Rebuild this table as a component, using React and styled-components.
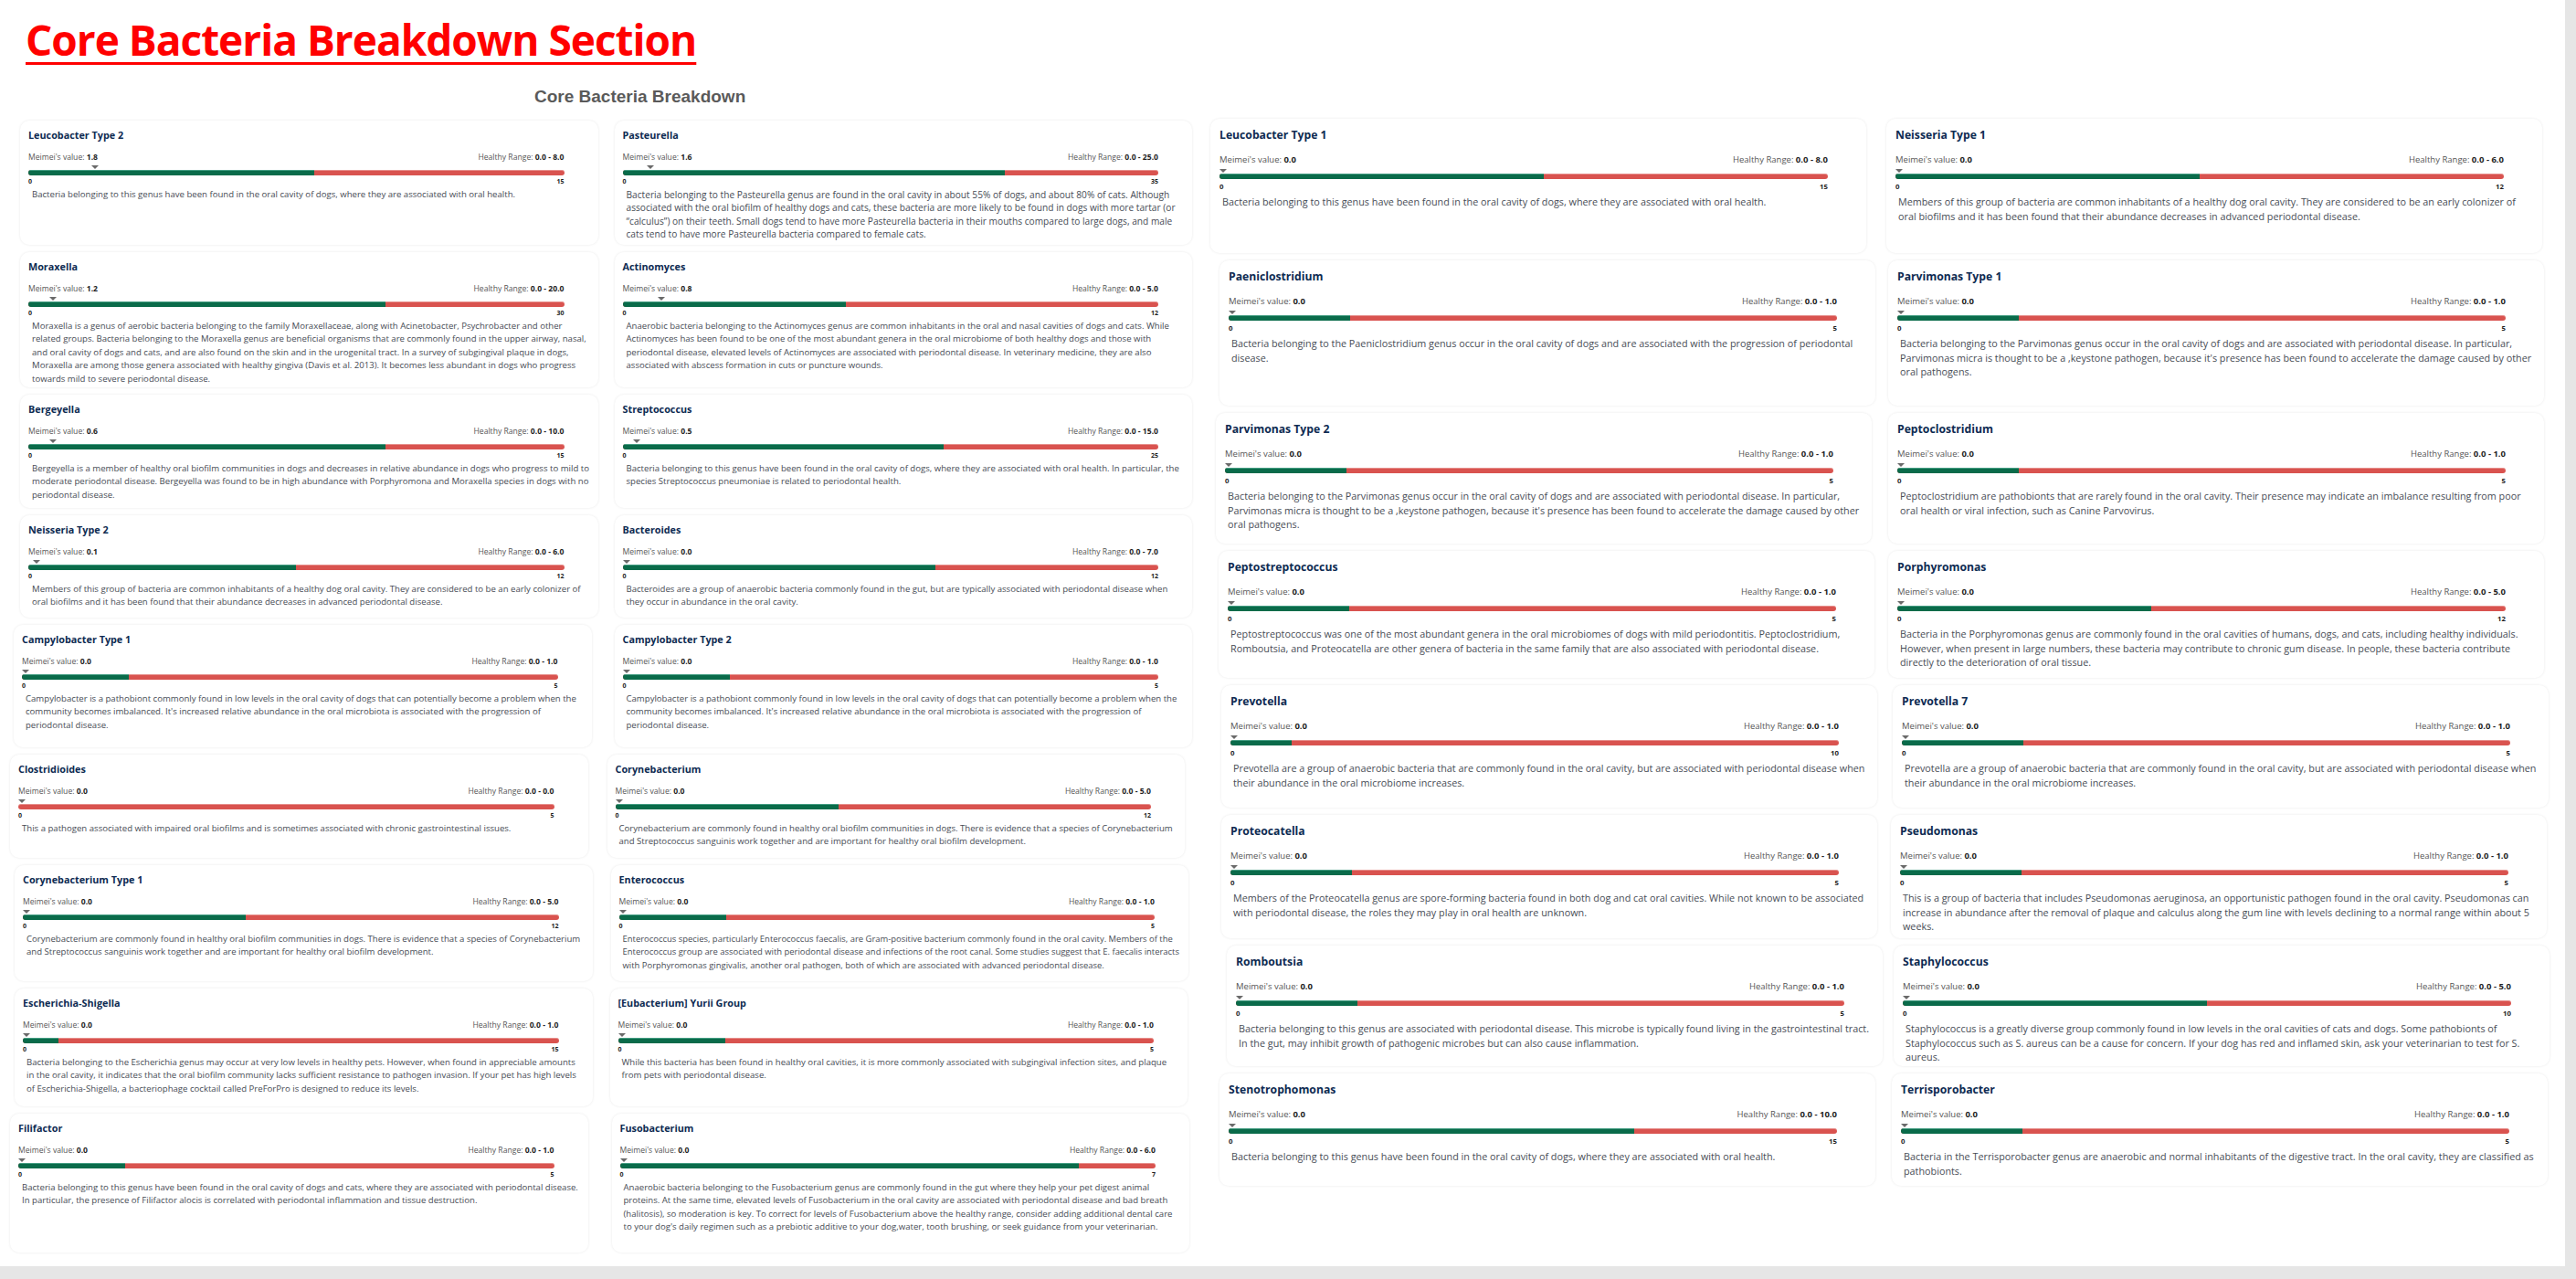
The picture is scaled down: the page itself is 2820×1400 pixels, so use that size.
import React from "react";
import styled, { createGlobalStyle } from "styled-components";

const GlobalStyle = createGlobalStyle`
  html, body {
    margin: 0;
    padding: 0;
    background: #e6e6e6;
  }
  body {
    font-family: "Open Sans", "Noto Sans", sans-serif;
  }
`;

// two scales of the same card: the left half is a bit smaller than the right
const sizes = {
  sm: {
    padX: 9,
    padTop: 9,
    title: 10.8,
    titleLh: 14,
    labelGap: 12,
    label: 8.6,
    labelLh: 10,
    zone: 9,
    tri: 8,
    barH: 6,
    barRight: 28,
    tickGap: 3,
    tick: 7,
    tickLh: 8,
    descGap: 3,
    desc: 9.6,
    descLh: 14.4,
    descPad: 4,
  },
  lg: {
    padX: 10,
    padTop: 10,
    title: 12.2,
    titleLh: 16,
    labelGap: 13,
    label: 9.5,
    labelLh: 11,
    zone: 10,
    tri: 9,
    barH: 6,
    barRight: 32,
    tickGap: 4,
    tick: 7.8,
    tickLh: 9,
    descGap: 4,
    desc: 10.8,
    descLh: 15.7,
    descPad: 3,
  },
};

// nudge: small sideways offset of a card; boost: larger body text in that card
const leftCards = [
  {
    name: "Leucobacter Type 2", value: 1.8, range: 8, max: 15,
    desc: "Bacteria belonging to this genus have been found in the oral cavity of dogs, where they are associated with oral health.",
  },
  {
    name: "Pasteurella", value: 1.6, range: 25, max: 35, boost: 1.06,
    desc: "Bacteria belonging to the Pasteurella genus are found in the oral cavity in about 55% of dogs, and about 80% of cats. Although associated with the oral biofilm of healthy dogs and cats, these bacteria are more likely to be found in dogs with more tartar (or \u201ccalculus\u201d) on their teeth. Small dogs tend to have more Pasteurella bacteria in their mouths compared to large dogs, and male cats tend to have more Pasteurella bacteria compared to female cats.",
  },
  {
    name: "Moraxella", value: 1.2, range: 20, max: 30,
    desc: "Moraxella is a genus of aerobic bacteria belonging to the family Moraxellaceae, along with Acinetobacter, Psychrobacter and other related groups. Bacteria belonging to the Moraxella genus are beneficial organisms that are commonly found in the upper airway, nasal, and oral cavity of dogs and cats, and are also found on the skin and in the urogenital tract. In a survey of subgingival plaque in dogs, Moraxella are among those genera associated with healthy gingiva (Davis et al. 2013). It becomes less abundant in dogs who progress towards mild to severe periodontal disease.",
  },
  {
    name: "Actinomyces", value: 0.8, range: 5, max: 12,
    desc: "Anaerobic bacteria belonging to the Actinomyces genus are common inhabitants in the oral and nasal cavities of dogs and cats. While Actinomyces has been found to be one of the most abundant genera in the oral microbiome of both healthy dogs and those with periodontal disease, elevated levels of Actinomyces are associated with periodontal disease. In veterinary medicine, they are also associated with abscess formation in cuts or puncture wounds.",
  },
  {
    name: "Bergeyella", value: 0.6, range: 10, max: 15,
    desc: "Bergeyella is a member of healthy oral biofilm communities in dogs and decreases in relative abundance in dogs who progress to mild to moderate periodontal disease. Bergeyella was found to be in high abundance with Porphyromona and Moraxella species in dogs with no periodontal disease.",
  },
  {
    name: "Streptococcus", value: 0.5, range: 15, max: 25,
    desc: "Bacteria belonging to this genus have been found in the oral cavity of dogs, where they are associated with oral health. In particular, the species Streptococcus pneumoniae is related to periodontal health.",
  },
  {
    name: "Neisseria Type 2", value: 0.1, range: 6, max: 12,
    desc: "Members of this group of bacteria are common inhabitants of a healthy dog oral cavity. They are considered to be an early colonizer of oral biofilms and it has been found that their abundance decreases in advanced periodontal disease.",
  },
  {
    name: "Bacteroides", value: 0, range: 7, max: 12,
    desc: "Bacteroides are a group of anaerobic bacteria commonly found in the gut, but are typically associated with periodontal disease when they occur in abundance in the oral cavity.",
  },
  {
    name: "Campylobacter Type 1", value: 0, range: 1, max: 5, nudge: -7,
    desc: "Campylobacter is a pathobiont commonly found in low levels in the oral cavity of dogs that can potentially become a problem when the community becomes imbalanced. It's increased relative abundance in the oral microbiota is associated with the progression of periodontal disease.",
  },
  {
    name: "Campylobacter Type 2", value: 0, range: 1, max: 5,
    desc: "Campylobacter is a pathobiont commonly found in low levels in the oral cavity of dogs that can potentially become a problem when the community becomes imbalanced. It's increased relative abundance in the oral microbiota is associated with the progression of periodontal disease.",
  },
  {
    name: "Clostridioides", value: 0, range: 0, max: 5, nudge: -11,
    desc: "This a pathogen associated with impaired oral biofilms and is sometimes associated with chronic gastrointestinal issues.",
  },
  {
    name: "Corynebacterium", value: 0, range: 5, max: 12, nudge: -8,
    desc: "Corynebacterium are commonly found in healthy oral biofilm communities in dogs. There is evidence that a species of Corynebacterium and Streptococcus sanguinis work together and are important for healthy oral biofilm development.",
  },
  {
    name: "Corynebacterium Type 1", value: 0, range: 5, max: 12, nudge: -6,
    desc: "Corynebacterium are commonly found in healthy oral biofilm communities in dogs. There is evidence that a species of Corynebacterium and Streptococcus sanguinis work together and are important for healthy oral biofilm development.",
  },
  {
    name: "Enterococcus", value: 0, range: 1, max: 5, nudge: -4, boost: 0.985,
    desc: "Enterococcus species, particularly Enterococcus faecalis, are Gram-positive bacterium commonly found in the oral cavity. Members of the Enterococcus group are associated with periodontal disease and infections of the root canal. Some studies suggest that E. faecalis interacts with Porphyromonas gingivalis, another oral pathogen, both of which are associated with advanced periodontal disease.",
  },
  {
    name: "Escherichia-Shigella", value: 0, range: 1, max: 15, nudge: -6,
    desc: "Bacteria belonging to the Escherichia genus may occur at very low levels in healthy pets. However, when found in appreciable amounts in the oral cavity, it indicates that the oral biofilm community lacks sufficient resistance to pathogen invasion. If your pet has high levels of Escherichia-Shigella, a bacteriophage cocktail called PreForPro is designed to reduce its levels.",
  },
  {
    name: "[Eubacterium] Yurii Group", value: 0, range: 1, max: 5, nudge: -5,
    desc: "While this bacteria has been found in healthy oral cavities, it is more commonly associated with subgingival infection sites, and plaque from pets with periodontal disease.",
  },
  {
    name: "Filifactor", value: 0, range: 1, max: 5, nudge: -11,
    desc: "Bacteria belonging to this genus have been found in the oral cavity of dogs and cats, where they are associated with periodontal disease. In particular, the presence of Filifactor alocis is correlated with periodontal inflammation and tissue destruction.",
  },
  {
    name: "Fusobacterium", value: 0, range: 6, max: 7, nudge: -3,
    desc: "Anaerobic bacteria belonging to the Fusobacterium genus are commonly found in the gut where they help your pet digest animal proteins. At the same time, elevated levels of Fusobacterium in the oral cavity are associated with periodontal disease and bad breath (halitosis), so moderation is key. To correct for levels of Fusobacterium above the healthy range, consider adding additional dental care to your dog's daily regimen such as a prebiotic additive to your dog,water, tooth brushing, or seek guidance from your veterinarian.",
  },
];

const rightCards = [
  {
    name: "Leucobacter Type 1", value: 0, range: 8, max: 15, nudge: -6,
    desc: "Bacteria belonging to this genus have been found in the oral cavity of dogs, where they are associated with oral health.",
  },
  {
    name: "Neisseria Type 1", value: 0, range: 6, max: 12, nudge: -2,
    desc: "Members of this group of bacteria are common inhabitants of a healthy dog oral cavity. They are considered to be an early colonizer of oral biofilms and it has been found that their abundance decreases in advanced periodontal disease.",
  },
  {
    name: "Paeniclostridium", value: 0, range: 1, max: 5, nudge: 4,
    desc: "Bacteria belonging to the Paeniclostridium genus occur in the oral cavity of dogs and are associated with the progression of periodontal disease.",
  },
  {
    name: "Parvimonas Type 1", value: 0, range: 1, max: 5,
    desc: "Bacteria belonging to the Parvimonas genus occur in the oral cavity of dogs and are associated with periodontal disease. In particular, Parvimonas micra is thought to be a \u201akeystone pathogen, because it's presence has been found to accelerate the damage caused by other oral pathogens.",
  },
  {
    name: "Parvimonas Type 2", value: 0, range: 1, max: 5,
    desc: "Bacteria belonging to the Parvimonas genus occur in the oral cavity of dogs and are associated with periodontal disease. In particular, Parvimonas micra is thought to be a \u201akeystone pathogen, because it's presence has been found to accelerate the damage caused by other oral pathogens.",
  },
  {
    name: "Peptoclostridium", value: 0, range: 1, max: 5,
    desc: "Peptoclostridium are pathobionts that are rarely found in the oral cavity. Their presence may indicate an imbalance resulting from poor oral health or viral infection, such as Canine Parvovirus.",
  },
  {
    name: "Peptostreptococcus", value: 0, range: 1, max: 5, nudge: 3,
    desc: "Peptostreptococcus was one of the most abundant genera in the oral microbiomes of dogs with mild periodontitis. Peptoclostridium, Romboutsia, and Proteocatella are other genera of bacteria in the same family that are also associated with periodontal disease.",
  },
  {
    name: "Porphyromonas", value: 0, range: 5, max: 12,
    desc: "Bacteria in the Porphyromonas genus are commonly found in the oral cavities of humans, dogs, and cats, including healthy individuals. However, when present in large numbers, these bacteria may contribute to chronic gum disease. In people, these bacteria contribute directly to the deterioration of oral tissue.",
  },
  {
    name: "Prevotella", value: 0, range: 1, max: 10, nudge: 6,
    desc: "Prevotella are a group of anaerobic bacteria that are commonly found in the oral cavity, but are associated with periodontal disease when their abundance in the oral microbiome increases.",
  },
  {
    name: "Prevotella 7", value: 0, range: 1, max: 5, nudge: 5,
    desc: "Prevotella are a group of anaerobic bacteria that are commonly found in the oral cavity, but are associated with periodontal disease when their abundance in the oral microbiome increases.",
  },
  {
    name: "Proteocatella", value: 0, range: 1, max: 5, nudge: 6,
    desc: "Members of the Proteocatella genus are spore-forming bacteria found in both dog and cat oral cavities. While not known to be associated with periodontal disease, the roles they may play in oral health are unknown.",
  },
  {
    name: "Pseudomonas", value: 0, range: 1, max: 5, nudge: 3,
    desc: "This is a group of bacteria that includes Pseudomonas aeruginosa, an opportunistic pathogen found in the oral cavity. Pseudomonas can increase in abundance after the removal of plaque and calculus along the gum line with levels declining to a normal range within about 5 weeks.",
  },
  {
    name: "Romboutsia", value: 0, range: 1, max: 5, nudge: 12,
    desc: "Bacteria belonging to this genus are associated with periodontal disease. This microbe is typically found living in the gastrointestinal tract. In the gut, may inhibit growth of pathogenic microbes but can also cause inflammation.",
  },
  {
    name: "Staphylococcus", value: 0, range: 5, max: 10, nudge: 6,
    desc: "Staphylococcus is a greatly diverse group  commonly found in low levels in the oral cavities of cats and dogs. Some pathobionts of Staphylococcus such as S. aureus can be a cause for concern. If your dog has red and inflamed skin, ask your veterinarian to test for S. aureus.",
  },
  {
    name: "Stenotrophomonas", value: 0, range: 10, max: 15, nudge: 4,
    desc: "Bacteria belonging to this genus have been found in the oral cavity of dogs, where they are associated with oral health.",
  },
  {
    name: "Terrisporobacter", value: 0, range: 1, max: 5, nudge: 4,
    desc: "Bacteria in the Terrisporobacter genus are anaerobic and normal inhabitants of the digestive tract. In the oral cavity, they are classified as pathobionts.",
  },
];

const leftRows = [136, 148, 124, 112, 134, 113, 127, 129, 152];
const rightRows = [147, 159, 143, 139, 134, 135, 132, 123];

const Frame = styled.div`
  width: 2808px;
  height: 1386px;
  background: #fff;
  display: flex;
  gap: 26px;
  padding-left: 22px;
  box-sizing: border-box;
  overflow: hidden;
`;

const LeftPane = styled.section`
  width: 1283px;
  flex: none;
  padding-top: 20px;
`;

const RightPane = styled.section`
  width: 1454px;
  flex: none;
  padding-top: 130px;
`;

const Heading = styled.h1`
  margin: 0 0 0 6px;
  font-family: "Open Sans", "Noto Sans", sans-serif;
  font-weight: 700;
  font-size: 46px;
  line-height: 46px;
  letter-spacing: -1px;
  color: #f00;
  text-decoration: underline;
  text-decoration-thickness: 3px;
  text-underline-offset: 7px;
  white-space: nowrap;
`;

const SubHeading = styled.h2`
  margin: 29px 0 0 563px;
  font-family: "Liberation Sans", Arial, sans-serif;
  font-weight: 700;
  font-size: 19px;
  line-height: 22px;
  color: #5a5a5a;
`;

const Grid = styled.div`
  display: grid;
  grid-template-columns: 1fr 1fr;
  grid-template-rows: ${(p) => p.$rows.map((h) => `${h}px`).join(" ")};
  column-gap: 18px;
  row-gap: 8px;
  margin-top: ${(p) => p.$top}px;
`;

const Card = styled.article`
  background: #fff;
  border-radius: 10px;
  box-shadow: 0 0 3px rgba(0, 0, 0, 0.09);
  padding: ${(p) => sizes[p.$size].padTop}px ${(p) => sizes[p.$size].padX}px 0;
  margin-left: ${(p) => p.$nudge}px;
  margin-right: ${(p) => -p.$nudge}px;
  overflow: hidden;
  min-width: 0;
`;

const Title = styled.h3`
  margin: 0;
  font-size: ${(p) => sizes[p.$size].title}px;
  line-height: ${(p) => sizes[p.$size].titleLh}px;
  font-weight: 700;
  color: #0e2b52;
`;

const Meter = styled.div`
  margin-right: ${(p) => sizes[p.$size].barRight}px;
`;

const LabelRow = styled.div`
  display: flex;
  justify-content: space-between;
  margin-top: ${(p) => sizes[p.$size].labelGap}px;
  font-size: ${(p) => sizes[p.$size].label}px;
  line-height: ${(p) => sizes[p.$size].labelLh}px;
  color: #555;

  b {
    font-weight: 700;
    color: #1e1e1e;
  }
`;

const MarkerZone = styled.div`
  position: relative;
  height: ${(p) => sizes[p.$size].zone}px;
`;

const Marker = styled.span`
  position: absolute;
  bottom: 1px;
  width: 0;
  height: 0;
  border-left: ${(p) => sizes[p.$size].tri / 2}px solid transparent;
  border-right: ${(p) => sizes[p.$size].tri / 2}px solid transparent;
  border-top: ${(p) => sizes[p.$size].tri / 2}px solid #6a6a6a;
`;

const Track = styled.div`
  display: flex;
  height: ${(p) => sizes[p.$size].barH}px;
  border-radius: 4px;
  overflow: hidden;
  background: #d9534f;
  box-shadow: inset 0 1px 0 rgba(255, 255, 255, 0.35);
`;

const Healthy = styled.div`
  background: #0a6b4a;
  box-shadow: inset 0 1px 0 rgba(140, 220, 200, 0.45);
  flex: none;
`;

const TickRow = styled.div`
  display: flex;
  justify-content: space-between;
  margin-top: ${(p) => sizes[p.$size].tickGap}px;
  font-size: ${(p) => sizes[p.$size].tick}px;
  line-height: ${(p) => sizes[p.$size].tickLh}px;
  font-weight: 700;
  color: #1e1e1e;
`;

const Desc = styled.p`
  margin: ${(p) => sizes[p.$size].descGap}px 0 0;
  padding-left: ${(p) => sizes[p.$size].descPad}px;
  font-size: ${(p) => sizes[p.$size].desc * p.$boost}px;
  line-height: ${(p) => sizes[p.$size].descLh}px;
  color: #474c55;
`;

const BacteriaCard = ({ item, size }) => {
  const fmt = (n) => n.toFixed(1);
  const healthyPct = (item.range / item.max) * 100;
  const valuePct = Math.min(item.value / item.max, 1);
  const tri = sizes[size].tri;
  return (
    <Card $size={size} $nudge={item.nudge || 0}>
      <Title $size={size}>{item.name}</Title>
      <Meter $size={size}>
        <LabelRow $size={size}>
          <span>
            Meimei's value: <b>{fmt(item.value)}</b>
          </span>
          <span>
            Healthy Range: <b>{`0.0 - ${fmt(item.range)}`}</b>
          </span>
        </LabelRow>
        <MarkerZone $size={size}>
          <Marker
            $size={size}
            style={{ left: `calc(${valuePct * 100}% - ${valuePct * tri}px)` }}
          />
        </MarkerZone>
        <Track $size={size}>
          <Healthy style={{ width: `${healthyPct}%` }} />
        </Track>
        <TickRow $size={size}>
          <span>0</span>
          <span>{item.max}</span>
        </TickRow>
      </Meter>
      <Desc $size={size} $boost={item.boost || 1}>
        {item.desc}
      </Desc>
    </Card>
  );
};

export default function App() {
  return (
    <>
      <GlobalStyle />
      <Frame>
        <LeftPane>
          <Heading>Core Bacteria Breakdown Section</Heading>
          <SubHeading>Core Bacteria Breakdown</SubHeading>
          <Grid $rows={leftRows} $top={15}>
            {leftCards.map((item) => (
              <BacteriaCard key={item.name} item={item} size="sm" />
            ))}
          </Grid>
        </LeftPane>
        <RightPane>
          <Grid $rows={rightRows} $top={0}>
            {rightCards.map((item) => (
              <BacteriaCard key={item.name} item={item} size="lg" />
            ))}
          </Grid>
        </RightPane>
      </Frame>
    </>
  );
}
